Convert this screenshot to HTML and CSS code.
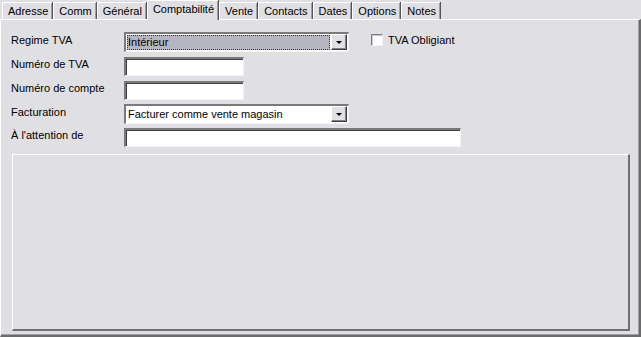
FILE: index.html
```html
<!DOCTYPE html>
<html lang="fr">
<head>
    <meta charset="UTF-8">
    <title>Comptabilité</title>
    <link rel="stylesheet" href="styles.css">
</head>
<body>

<div class="tabs">
    <div class="tab">Adresse</div>
    <div class="tab">Comm</div>
    <div class="tab">Général</div>
    <div class="tab active">Comptabilité</div>
    <div class="tab">Vente</div>
    <div class="tab">Contacts</div>
    <div class="tab">Dates</div>
    <div class="tab">Options</div>
    <div class="tab">Notes</div>
</div>

<div class="panel">
    <div class="row row-first">
        <label class="label">Regime TVA</label>
        <div class="combo combo-focus">
            <span class="combo-text">Intérieur</span>
            <span class="combo-btn"><span class="arrow"></span></span>
        </div>
        <div class="check">
            <span class="check-box"></span>
            <span>TVA Obligiant</span>
        </div>
    </div>
    <div class="row">
        <label class="label">Numéro de TVA</label>
        <div class="field field-short"></div>
    </div>
    <div class="row">
        <label class="label">Numéro de compte</label>
        <div class="field field-short"></div>
    </div>
    <div class="row row-combo">
        <label class="label">Facturation</label>
        <div class="combo">
            <span class="combo-text">Facturer comme vente magasin</span>
            <span class="combo-btn"><span class="arrow"></span></span>
        </div>
    </div>
    <div class="row">
        <label class="label">À l'attention de</label>
        <div class="field field-long"></div>
    </div>

    <div class="inner-panel"></div>
</div>

</body>
</html>
```

FILE: styles.css
```css
body {
    margin: 0;
    padding: 0;
    background-color: #e0dfe3;
    font-family: 'Liberation Sans', Arial, sans-serif;
    font-size: 11px;
    color: #000;
    width: 641px;
    height: 337px;
    overflow: hidden;
}

/* tab strip */
.tabs {
    display: flex;
    align-items: flex-end;
    height: 19px;
    padding-left: 2px;
}

.tab {
    height: 16px;
    line-height: 16px;
    padding: 0 4px 0 5px;
    border-left: 1px solid #fff;
    border-top: 1px solid #fff;
    box-shadow: inset -1px 0 0 #a0a0a0, 1px 0 0 #555;
    margin-right: 1px;
    white-space: nowrap;
}

.tab.active {
    height: 19px;
    line-height: 17px;
    margin-bottom: -1px;
    position: relative;
    z-index: 1;
    background-color: #e0dfe3;
}

/* page */
.panel {
    height: 318px;
    border-top: 1px solid #fff;
    border-left: 1px solid #fff;
    border-right: 2px solid #6b6b6b;
    border-bottom: 2px solid #6b6b6b;
    box-shadow: inset -1px -1px 0 #a0a0a0;
    padding: 9px 0 0 10px;
    box-sizing: border-box;
}

.row {
    display: flex;
    align-items: center;
    height: 24px;
}

.row-first {
    height: 25px;
}

.row-combo {
    height: 23px;
}

.label {
    width: 113px;
    margin-top: -4px;
}

/* sunken edit boxes */
.field {
    height: 16px;
    background-color: #fff;
    border-top: 2px solid #7a7a7a;
    border-left: 2px solid #7a7a7a;
    border-right: 1px solid #f4f4f4;
    border-bottom: 1px solid #f4f4f4;
    box-shadow: inset 1px 1px 0 #404040;
}

.field-short {
    width: 117px;
}

.field-long {
    width: 334px;
}

/* combo boxes */
.combo {
    display: flex;
    align-items: center;
    width: 220px;
    height: 15px;
    background-color: #fff;
    border-top: 2px solid #7a7a7a;
    border-left: 2px solid #7a7a7a;
    border-right: 1px solid #f4f4f4;
    border-bottom: 1px solid #f4f4f4;
    padding: 1px;
}

.combo-text {
    flex: 1;
    height: 15px;
    line-height: 15px;
    padding-left: 1px;
    white-space: nowrap;
}

.combo-focus .combo-text {
    background-color: #b6b6c2;
    outline: 1px dotted #333;
    outline-offset: -1px;
    margin-right: 1px;
}

.combo-btn {
    width: 14px;
    height: 14px;
    background-color: #e0dfe3;
    border-top: 1px solid #fff;
    border-left: 1px solid #fff;
    border-right: 1px solid #404040;
    border-bottom: 1px solid #404040;
    box-shadow: inset -1px -1px 0 #808080;
    display: flex;
    align-items: center;
    justify-content: center;
}

.arrow {
    width: 0;
    height: 0;
    border-left: 3px solid transparent;
    border-right: 3px solid transparent;
    border-top: 3px solid #000;
    margin-top: 1px;
}

/* checkbox */
.check {
    display: flex;
    align-items: center;
    margin-left: 22px;
    margin-top: -3px;
}

.check-box {
    width: 10px;
    height: 10px;
    background-color: #fff;
    border-top: 1px solid #808080;
    border-left: 1px solid #808080;
    border-right: 1px solid #f4f4f4;
    border-bottom: 1px solid #f4f4f4;
    box-shadow: inset 1px 1px 0 #c8c8c8;
    margin-right: 5px;
}

/* empty raised area */
.inner-panel {
    margin-top: 5px;
    margin-left: 1px;
    width: 615px;
    height: 174px;
    border-top: 1px solid #fff;
    border-left: 1px solid #fff;
    border-right: 2px solid #707070;
    border-bottom: 2px solid #707070;
}
```
